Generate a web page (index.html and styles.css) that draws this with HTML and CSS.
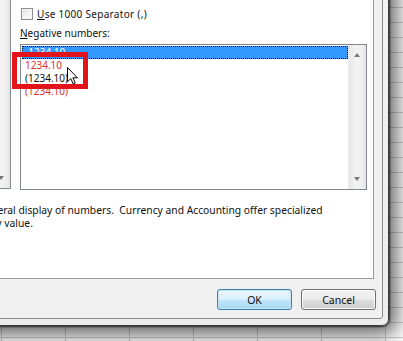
FILE: index.html
```html
<!DOCTYPE html>
<html>
<head>
<meta charset="utf-8">
<link rel="stylesheet" href="styles.css">
</head>
<body>
<div class="desk">
  <div class="dialog">
    <div class="win-body">
      <div class="panel">
        <div class="main">
          <div class="category">
            <div class="cat-label">Category:</div>
            <div class="cat-list">
              <div class="cat-items"></div>
              <div class="vscroll">
                <span class="arr up"></span>
                <span class="arr down"></span>
              </div>
            </div>
          </div>
          <div class="options">
            <div class="decimal-row">
              <span class="dec-label">Decimal places:</span>
              <span class="dec-input">2</span>
            </div>
            <label class="check-row">
              <span class="checkbox"></span>
              <span class="check-text"><u>U</u>se 1000 Separator (,)</span>
            </label>
            <div class="neg-label"><u>N</u>egative numbers:</div>
            <div class="neg-list">
              <div class="items">
                <div class="item selected">-1234.10</div>
                <div class="item red">1234.10</div>
                <div class="item">(1234.10)</div>
                <div class="item red">(1234.10)</div>
              </div>
              <div class="vscroll">
                <span class="arr up"></span>
                <span class="arr down"></span>
              </div>
            </div>
          </div>
        </div>
        <p class="desc">Number is used for general display of numbers.&nbsp; Currency and Accounting offer specialized<br>formatting for monetary value.</p>
      </div>
      <div class="buttons">
        <button class="btn default">OK</button>
        <button class="btn">Cancel</button>
      </div>
    </div>
  </div>
  <div class="highlight"></div>
  <svg class="cursor" width="12" height="18" viewBox="0 0 12 18">
    <path d="M0.5 0.5 V14.8 L3.8 11.6 L6.2 16.9 L8.3 16 L5.9 10.8 H10.4 Z" fill="#fff" stroke="#000" stroke-width="1" stroke-linejoin="miter"/>
  </svg>
</div>
</body>
</html>
```

FILE: styles.css
```css
html, body {
  margin: 0;
  padding: 0;
}
body {
  width: 403px;
  height: 341px;
  overflow: hidden;
  font-family: "Noto Sans", "Open Sans", sans-serif;
  font-size: 10px;
  color: #111;
}
.desk {
  position: relative;
  width: 403px;
  height: 341px;
  overflow: hidden;
  background-color: #fff;
  background-image:
    linear-gradient(to right, #d0d0d0 1px, transparent 1px),
    linear-gradient(to bottom, #d0d0d0 1px, transparent 1px);
  background-size: 64px 15px;
  background-position: 1px 7px;
}
.dialog {
  position: absolute;
  left: -141px;
  top: -100px;
  width: 530px;
  height: 426px;
  box-sizing: border-box;
  border: 1px solid #3a3a3a;
  border-radius: 0 0 7px 7px;
  padding: 5px 5px 6px 5px;
  background: linear-gradient(to bottom, #f4f4f4, #ececec);
  box-shadow: 0 0 2px 1px rgba(0,0,0,.7), 2px 3px 20px 6px rgba(0,0,0,.6);
  display: flex;
}
.win-body {
  flex: 1;
  min-width: 0;
  border: 1px solid #8c8c8c;
  border-radius: 0 0 3px 3px;
  background: #f0f0f0;
  padding: 8px 0 0 8px;
  display: flex;
  flex-direction: column;
}
.panel {
  flex: 1;
  margin-right: 8px;
  background: #fff;
  border: 1px solid #9a9a9a;
  padding: 44px 6px 0 8px;
  display: flex;
  flex-direction: column;
}
.main {
  display: flex;
  gap: 9px;
  height: 232px;
}
.category {
  width: 128px;
  display: flex;
  flex-direction: column;
}
.cat-label {
  height: 13px;
  line-height: 13px;
}
.cat-list {
  margin-top: 2px;
  height: 214px;
  box-sizing: border-box;
  border: 1px solid #828790;
  display: flex;
}
.cat-items { flex: 1; }
.vscroll {
  width: 17px;
  position: relative;
  background: linear-gradient(to right, #e6e6e6, #f3f3f3 40%, #f0f0f0 70%, #e4e4e4);
  border-left: 1px solid #ececec;
}
.arr {
  position: absolute;
  left: 5px;
  width: 0;
  height: 0;
  border-left: 3.5px solid transparent;
  border-right: 3.5px solid transparent;
}
.arr.up {
  top: 8px;
  border-bottom: 4px solid #7a7a7a;
}
.arr.down {
  bottom: 8px;
  border-top: 4px solid #7a7a7a;
}
.options {
  flex: 1;
  display: flex;
  flex-direction: column;
}
.decimal-row {
  display: flex;
  align-items: center;
  margin-top: 18px;
  height: 22px;
}
.dec-label {
  width: 83px;
}
.dec-input {
  width: 58px;
  height: 22px;
  box-sizing: border-box;
  border: 1px solid #abadb3;
  padding-left: 3px;
  line-height: 20px;
}
.check-row {
  display: flex;
  align-items: center;
  gap: 4px;
  margin-top: 8px;
  height: 12px;
  padding-left: 1px;
}
.check-text {
  letter-spacing: 0.3px;
}
.checkbox {
  width: 12px;
  height: 12px;
  box-sizing: border-box;
  border: 1px solid #8e8f8f;
  background: linear-gradient(135deg, #dcdcdc, #f6f6f6 60%, #ffffff);
  box-shadow: inset 0 0 0 1px #f4f4f4;
}
.neg-label {
  margin-top: 7px;
  height: 13px;
  line-height: 13px;
}
.neg-list {
  margin-top: 4px;
  height: 146px;
  box-sizing: border-box;
  border: 1px solid #828790;
  display: flex;
}
.items {
  flex: 1;
  padding: 1px 0 0 1px;
}
.item {
  height: 13px;
  line-height: 13px;
  padding-left: 3px;
  white-space: nowrap;
}
.item.selected {
  background: #3399ff;
  color: #fff;
  outline: 1px dotted #000;
  outline-offset: -1px;
}
.item.red {
  color: #d43232;
}
.desc {
  margin: 12px 0 0 0;
  font-size: 10.3px;
  line-height: 13px;
  white-space: nowrap;
}
.buttons {
  height: 39px;
  box-sizing: border-box;
  padding: 10px 6px 8px 0;
  display: flex;
  justify-content: flex-end;
  gap: 9px;
}
.btn {
  width: 75px;
  height: 21px;
  box-sizing: border-box;
  border: 1px solid #707070;
  border-radius: 3px;
  font-family: "Noto Sans", "Open Sans", sans-serif;
  font-size: 10.5px;
  color: #111;
  padding: 0;
  background: linear-gradient(to bottom, #f2f2f2 0%, #ebebeb 50%, #dddddd 51%, #cfcfcf 100%);
  box-shadow: inset 0 0 0 1px #fcfcfc;
}
.btn.default {
  border-color: #3c7fb1;
  background: linear-gradient(to bottom, #eaf6fd 0%, #d9f0fc 50%, #bee6fd 51%, #a7d9f5 100%);
  box-shadow: inset 0 0 0 1px #c6e6f7;
}
.highlight {
  position: absolute;
  left: 12px;
  top: 52px;
  width: 76px;
  height: 37px;
  box-sizing: border-box;
  border: 5px solid #e3131c;
}
.cursor {
  position: absolute;
  left: 67px;
  top: 67px;
}
```
